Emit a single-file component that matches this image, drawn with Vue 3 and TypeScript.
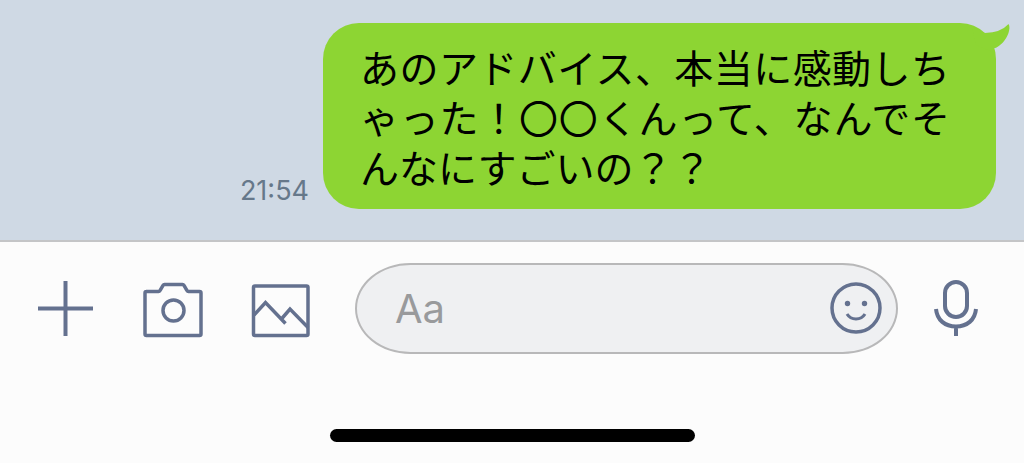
<script setup lang="ts">
import { ref } from 'vue'

interface Message {
  time: string
  text: string
}

const messages: Message[] = [
  { time: '21:54', text: 'あのアドバイス、本当に感動しちゃった！〇〇くんって、なんでそんなにすごいの？？' },
]
const draft = ref('')
</script>

<template>
  <div class="screen">
    <main class="chat">
      <div v-for="message in messages" :key="message.time" class="row">
        <time class="time">{{ message.time }}</time>
        <div class="bubble">
          <p class="text">{{ message.text }}</p>
          <svg class="tail" viewBox="0 0 40 30" aria-hidden="true">
            <path d="M2 4 L9 7 Q12 9.500 15 10 Q31 9.500 38.500 1 C40 3 39.500 7 38.500 10 C36 17 31 23 24 25.500 L25 30 L6 22Z" />
          </svg>
        </div>
      </div>
    </main>
    <form class="composer" @submit.prevent>
      <button type="button" class="icon" aria-label="Add">
        <svg width="56" height="60" viewBox="0 0 56 60"><path d="M0 29.500H55M27.500 2V57" stroke-width="4" /></svg>
      </button>
      <button type="button" class="icon" aria-label="Camera">
        <svg width="61" height="60" viewBox="-1 1 61 60">
          <path d="M3 13.500H15.500Q16.500 13.500 17 12.500L20 7.500Q20.500 6.500 21.500 6.500H39.500Q40.500 6.500 41 7.500L44 12.500Q44.500 13.500 45.500 13.500H56.500Q58 13.500 58 15V56Q58 57.500 56.500 57.500H3.500Q2 57.500 2 56V15Q2 13.500 3.500 13.500" />
          <circle cx="30.500" cy="32.500" r="10.500" />
        </svg>
      </button>
      <button type="button" class="icon" aria-label="Photos">
        <svg width="60" height="60" viewBox="0 1 60 60">
          <rect x="2.500" y="8" width="54.500" height="49.500" rx="1.500" />
          <path d="M3 37L14.500 24.500L34.500 45.500M30 41.500L39 31L57 49.500" />
        </svg>
      </button>
      <div class="field">
        <input v-model="draft" type="text" placeholder="Aa" aria-label="Message" />
        <button type="button" class="icon" aria-label="Stickers">
          <svg width="54" height="54" viewBox="0 1 54 54">
            <circle cx="27" cy="27" r="24" />
            <circle class="dot" cx="18.500" cy="22.500" r="2.700" />
            <circle class="dot" cx="35.500" cy="22.500" r="2.700" />
            <path d="M18 33Q21 38 27 38Q33 38 36 33" stroke-width="3" />
          </svg>
        </button>
      </div>
      <button type="button" class="icon" aria-label="Voice message">
        <svg width="44" height="60" viewBox="0 0 44 60">
          <rect x="11" y="3" width="22" height="35" rx="11" stroke-width="4" />
          <path d="M2 30C3 41 11 47.500 22 47.500S41 41 42 30M22 47V57" stroke-width="4" />
        </svg>
      </button>
    </form>
    <div class="home-indicator"></div>
  </div>
</template>

<style>
body {
  margin: 0;
  background: #fcfcfc;
}
</style>

<style scoped>
.screen {
  display: flex;
  flex-direction: column;
  min-height: 100vh;
  background: #fcfcfc;
  font-family: Inter, "Noto Sans CJK JP", sans-serif;
}

.chat {
  padding: 23px 28px 31px;
  background: #cfd9e4;
}

.row {
  display: flex;
  justify-content: flex-end;
  align-items: flex-end;
  gap: 14px;
}

.time {
  margin-bottom: 3px;
  color: #66788a;
  font-size: 27px;
  line-height: 30px;
}

.bubble {
  position: relative;
  padding: 18px 46px 18px 37px;
  border-radius: 36px;
  background: #8dd533;
}

.text {
  max-width: 590px;
  margin: 0;
  color: #000;
  font-family: "Noto Sans CJK JP", sans-serif;
  font-size: 39px;
  line-height: 50px;
  line-break: anywhere;
  text-align: justify;
}

.tail {
  position: absolute;
  top: 0;
  right: -14px;
  width: 40px;
  height: 30px;
  fill: #8dd533;
}

.composer {
  display: flex;
  align-items: center;
  padding: 21px 46px 0 38px;
  border-top: 2px solid #c4c5c7;
}

.icon {
  display: flex;
  flex: none;
  padding: 0;
  border: 0;
  background: none;
}

.icon + .icon {
  margin-left: 48px;
}

.icon svg {
  fill: none;
  stroke: #64718f;
  stroke-width: 3.500px;
}

.icon svg .dot {
  fill: #64718f;
  stroke: none;
}

.field {
  display: flex;
  flex: 1;
  align-items: center;
  box-sizing: border-box;
  min-width: 0;
  height: 91px;
  margin: 0 36px 0 44px;
  padding: 0 13px 0 38px;
  border: 2px solid #b8b8b9;
  border-radius: 56px / 46px;
  background: #eff0f2;
}

.field input {
  flex: 1;
  min-width: 0;
  padding: 0;
  border: 0;
  outline: 0;
  background: none;
  color: #000;
  font-family: Inter, "Noto Sans CJK JP", sans-serif;
  font-size: 40px;
  line-height: 48px;
}

.field input::placeholder {
  color: #999a9c;
  opacity: 1;
}

.home-indicator {
  width: 365px;
  max-width: 80%;
  height: 13px;
  margin: auto auto 21px;
  border-radius: 7px;
  background: #000;
}
</style>
